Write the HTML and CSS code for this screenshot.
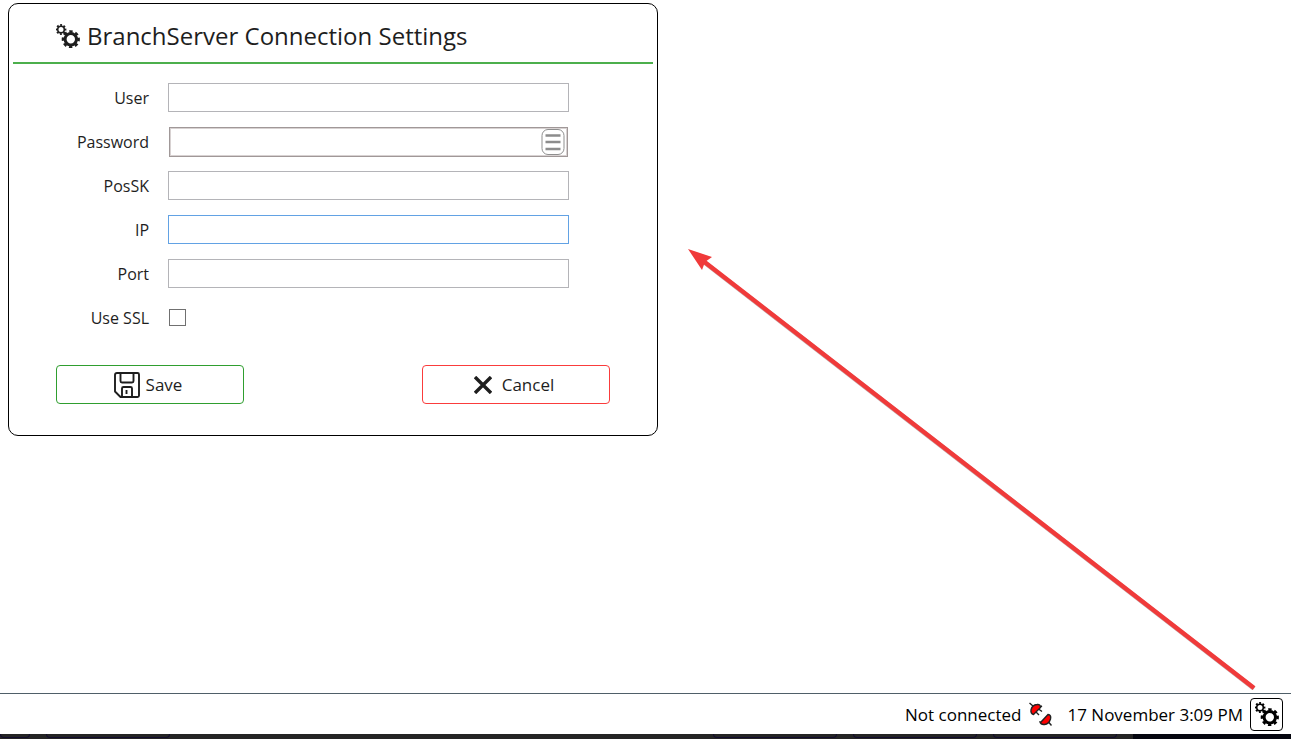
FILE: index.html
```html
<!DOCTYPE html>
<html lang="en">
<head>
    <meta charset="UTF-8">
    <meta name="viewport" content="width=device-width, initial-scale=1.0">
    <title>BranchServer Connection Settings</title>
    <link rel="stylesheet" href="styles.css">
</head>
<body>
    <svg class="sprite" aria-hidden="true">
        <symbol id="gears" viewBox="0 0 24 24">
            <g fill="none" stroke="currentColor">
                <circle cx="5" cy="5.5" r="3.3" stroke-width="1.6"/>
                <circle cx="5" cy="5.5" r="4.5" stroke-width="1.8" pathLength="16" stroke-dasharray="1.1 0.9" stroke-dashoffset="0.5"/>
                <circle cx="14.8" cy="15.3" r="5.7" stroke-width="3"/>
                <circle cx="14.8" cy="15.3" r="7.8" stroke-width="2.6" pathLength="16" stroke-dasharray="1.1 0.9" stroke-dashoffset="0.5"/>
            </g>
        </symbol>
    </svg>

    <main class="content">
        <form class="dialog">
            <header class="dialog-header">
                <svg class="icon-gears" aria-hidden="true"><use href="#gears"/></svg>
                <h1>BranchServer Connection Settings</h1>
            </header>

            <div class="fields">
                <label for="user">User</label>
                <input type="text" id="user">

                <label for="password">Password</label>
                <div class="password-box">
                    <input type="password" id="password">
                    <button type="button" class="keypad-btn" aria-label="Open keypad">
                        <svg viewBox="0 0 24 26" aria-hidden="true">
                            <rect x="1" y="0.5" width="22" height="25" rx="6" fill="#fff" stroke="#8f8f8f"/>
                            <path d="M4.500 6.500h15M4.500 13h15M4.500 20h15" stroke="#8c8c8c" stroke-width="2.600"/>
                        </svg>
                    </button>
                </div>

                <label for="possk">PosSK</label>
                <input type="text" id="possk">

                <label for="ip">IP</label>
                <input type="text" id="ip" class="active">

                <label for="port">Port</label>
                <input type="text" id="port">

                <label for="ssl">Use SSL</label>
                <input type="checkbox" id="ssl">
            </div>

            <div class="actions">
                <button type="submit" class="btn save">
                    <svg class="icon-save" viewBox="0 0 26 26" aria-hidden="true">
                        <g fill="none" stroke="currentColor" stroke-width="1.900" stroke-linejoin="round">
                            <path d="M3 1h20.500q1.500 0 1.500 1.500v21q0 1.500-1.500 1.500H6.500L1 19.500V3q0-2 2-2z"/>
                            <path d="M6.500 1v8q0 1.500 1.500 1.500h10q1.500 0 1.500-1.500V1"/>
                            <path d="M8 25v-8.500q0-1.500 1.500-1.500h7q1.500 0 1.500 1.500V25"/>
                            <path d="M12.500 18v4"/>
                        </g>
                    </svg>
                    Save
                </button>
                <button type="button" class="btn cancel">
                    <svg class="icon-cancel" viewBox="0 0 18 18" aria-hidden="true">
                        <path d="M1 1l16 16M17 1L1 17" stroke="currentColor" stroke-width="3.400"/>
                    </svg>
                    Cancel
                </button>
            </div>
        </form>

        <!-- arrow from the status bar button to the dialog -->
        <svg class="arrow" viewBox="0 0 568 441" aria-hidden="true">
            <path d="M14 11.500L566 439.500" stroke="#8a4a4a" stroke-width="4.600" opacity="0.500"/>
            <path d="M14 11L566 439" stroke="#f03a3a" stroke-width="4.400"/>
            <path d="M0 0L24 8L17 13L14 21z" fill="#f03a3a"/>
        </svg>
    </main>

    <footer class="status-bar">
        <span>Not connected</span>
        <svg class="icon-plug" viewBox="0 0 24 24" aria-hidden="true">
            <g stroke="#222" stroke-width="1.400" fill="#f00">
                <path d="M0.500 1l3.500 3M9.500 7l3.500 2.500M7 10l3 3M11 5l2-1"/>
                <path d="M4.500 12.500L11.500 5.500Q11.500 2 8 2.500Q3 3 2 8Q1.500 11.500 4.500 12.500z"/>
                <path d="M19.500 20l3 3.500"/>
                <path d="M12 20L19 12.500Q22.500 13 21.500 17Q20 22 15.500 22.500Q12 23 11 20z"/>
            </g>
        </svg>
        <time class="clock">17 November 3:09 PM</time>
        <button type="button" class="settings-btn" aria-label="Connection settings">
            <svg class="icon-gears" aria-hidden="true"><use href="#gears"/></svg>
        </button>
    </footer>
    <div class="taskbar">
        <span class="task"></span>
        <span class="task"></span>
        <span class="task"></span>
        <span class="task"></span>
        <span class="task"></span>
        <span class="tray"></span>
    </div>
</body>
</html>
```

FILE: styles.css
```css
* {
    box-sizing: border-box;
}
body {
    font-family: "Open Sans", "Noto Sans", sans-serif;
    font-size: 17px;
    color: #1e1e1e;
    background-color: white;
    display: flex;
    flex-direction: column;
    min-height: 100vh;
    margin: 0;
}
input, button {
    font: inherit;
    color: inherit;
    margin: 0;
}
.sprite {
    display: none;
}
.content {
    flex: 1;
    position: relative;
    padding: 3px 8px;
}
.dialog {
    max-width: 650px;
    padding: 0 4px 31px;
    border: 1px solid black;
    border-radius: 10px;
}
.dialog-header {
    display: flex;
    align-items: center;
    gap: 7px;
    padding: 12px 43px 6px;
    border-bottom: 2px solid #4caf4c;
}
.dialog-header h1 {
    margin: 0;
    font-size: 24px;
    font-weight: normal;
    line-height: 40px;
}
.icon-gears {
    width: 24px;
    height: 24px;
    flex: none;
}
.fields {
    display: grid;
    grid-template-columns: 136px 1fr;
    grid-auto-rows: 29px;
    align-items: center;
    column-gap: 19px;
    row-gap: 15px;
    padding: 19px 84px 0 0;
}
.fields label {
    font-size: 16px;
    text-align: right;
}
.fields input {
    width: 100%;
    height: 29px;
    padding: 0 6px;
    border: 1px solid #b4b4b8;
    background: white;
    outline: none;
}
.fields input.active {
    border-color: #62a2e4;
}
.password-box {
    display: flex;
    align-items: center;
    height: 30px;
    margin: 0 1px;
    padding: 1px;
    border: 1px solid #a09898;
    box-shadow: inset 0 0 0 1px #d8d2d2;
}
.fields .password-box input {
    flex: 1;
    height: 100%;
    border: none;
}
.keypad-btn {
    display: flex;
    width: 24px;
    height: 26px;
    margin-right: 1px;
    padding: 0;
    border: none;
    background: none;
    flex: none;
}
.keypad-btn svg {
    width: 24px;
    height: 26px;
}
.fields input[type="checkbox"] {
    appearance: none;
    width: 17px;
    height: 17px;
    margin-left: 1px;
    padding: 0;
    border-color: #707070;
}
.actions {
    display: flex;
    justify-content: space-between;
    padding: 33px 43px 0;
}
.btn {
    display: flex;
    align-items: center;
    justify-content: center;
    width: 188px;
    height: 39px;
    padding: 0 4px 0 0;
    background: white;
    border: 1px solid;
    border-radius: 4px;
    cursor: pointer;
}
.save {
    gap: 6px;
    border-color: #2f9e2f;
}
.cancel {
    gap: 10px;
    border-color: #fa3c3c;
}
.icon-save {
    width: 26px;
    height: 26px;
}
.icon-cancel {
    width: 18px;
    height: 18px;
}
.arrow {
    position: absolute;
    right: 35px;
    bottom: 3px;
    width: 568px;
    height: 441px;
    pointer-events: none;
}
.status-bar {
    display: flex;
    align-items: center;
    justify-content: flex-end;
    height: 41px;
    padding-right: 8px;
    border-top: 1px solid #4f5f68;
    color: black;
}
.icon-plug {
    width: 24px;
    height: 24px;
    margin: 0 14px 0 8px;
}
.clock {
    margin-right: 7px;
}
.settings-btn {
    display: flex;
    align-items: center;
    justify-content: center;
    width: 33px;
    height: 33px;
    padding: 0;
    background: white;
    border: 1px solid black;
    border-radius: 4px;
    cursor: pointer;
}
.taskbar {
    display: flex;
    gap: 16px;
    height: 5px;
    background-color: #242424;
}
.task {
    width: 124px;
    height: 4px;
    border: 1px solid #120c2c;
    border-top: none;
    border-radius: 0 0 6px 6px;
}
.task:first-child {
    width: 30px;
}
.task:nth-child(3) {
    margin-left: auto;
}
.tray {
    width: 158px;
    background-color: #05060f;
}
```
